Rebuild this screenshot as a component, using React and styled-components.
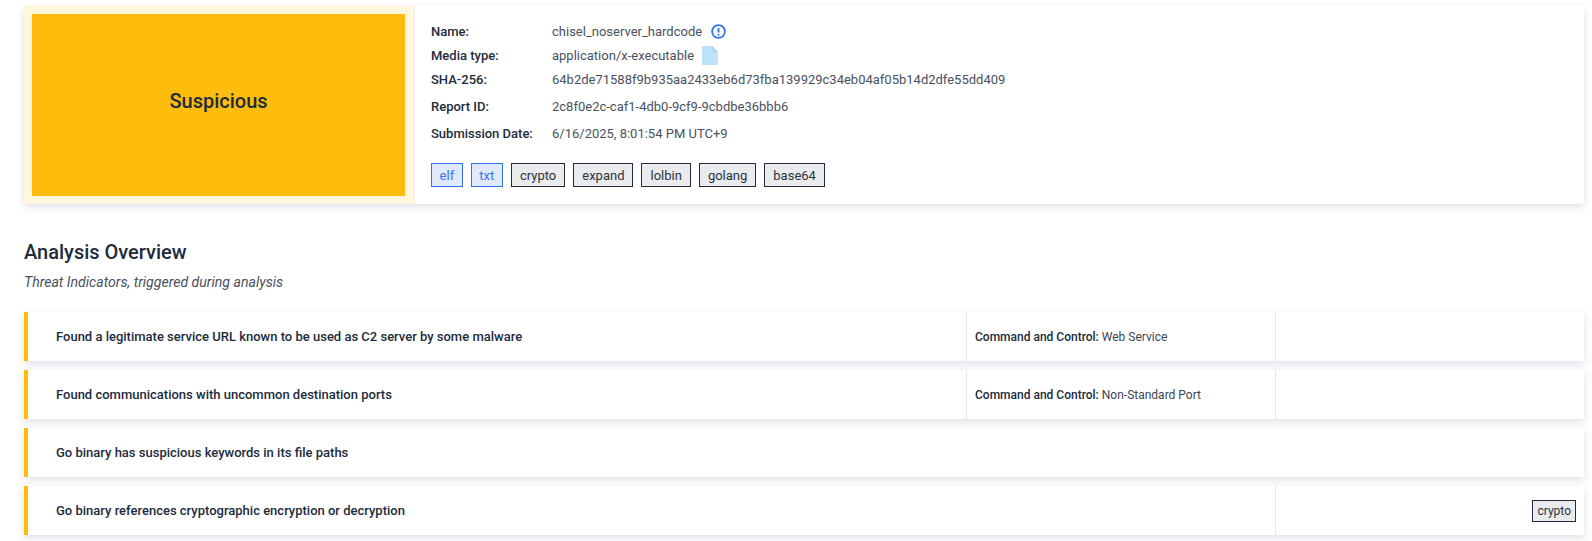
import React from 'react';
import styled, { createGlobalStyle } from 'styled-components';

const GlobalStyle = createGlobalStyle`
  html, body {
    margin: 0;
    padding: 0;
    background: #fff;
  }
  body {
    font-family: Roboto, "Liberation Sans", sans-serif;
    color: #212b3c;
  }
`;

const Page = styled.div`
  width: 1592px;
  height: 541px;
  overflow: hidden;
  box-sizing: border-box;
  padding: 6px 8px 0 24px;
`;

const ReportCard = styled.section`
  display: flex;
  height: 198px;
  background: #fff;
  box-shadow: 0 3px 8px rgba(60, 70, 110, 0.16);
`;

const VerdictFrame = styled.div`
  box-sizing: border-box;
  flex: 0 0 391px;
  padding: 8px 9px 8px 8px;
  background: #fff6dc;
  border-right: 1px solid #ececec;
`;

const VerdictBox = styled.div`
  box-sizing: border-box;
  display: flex;
  align-items: center;
  justify-content: center;
  height: 100%;
  padding-bottom: 9px;
  background: #febc0d;
  font-size: 20px;
  font-weight: 500;
`;

const Details = styled.div`
  flex: 1;
  padding: 13px 0 0 16px;
`;

const InfoRow = styled.div`
  display: flex;
  align-items: center;
  height: ${p => p.$height}px;
  font-size: 13px;
`;

const InfoLabel = styled.div`
  flex: 0 0 121px;
  font-weight: 500;
`;

const InfoValue = styled.div`
  display: flex;
  align-items: center;
  color: #4a5160;
`;

const AlertIcon = styled.svg`
  width: 15px;
  height: 15px;
  margin-left: 9px;
`;

const FileIcon = styled.svg`
  width: 16px;
  height: 19px;
  margin-left: 8px;
`;

const TagList = styled.div`
  display: flex;
  gap: 8px;
  margin-top: 18px;
`;

const Tag = styled.span`
  box-sizing: border-box;
  display: inline-flex;
  align-items: center;
  height: ${p => (p.$small ? 22 : 24)}px;
  padding: 0 ${p => (p.$small ? 4 : p.$blue ? 7.6 : 8)}px;
  font-size: ${p => (p.$small ? 12 : 13)}px;
  border: 1px solid ${p => (p.$blue ? '#2f72f0' : '#212b3c')};
  background: ${p => (p.$blue ? '#e0e9fb' : '#e9ebec')};
  color: ${p => (p.$blue ? '#3a74ee' : '#2b3342')};
`;

const SectionTitle = styled.h2`
  margin: 36px 0 0;
  font-size: 20px;
  line-height: 24px;
  font-weight: 500;
`;

const SectionNote = styled.p`
  margin: 9px 0 0;
  font-size: 14.1px;
  line-height: 18px;
  font-style: italic;
  color: #4a5160;
`;

const Indicators = styled.div`
  display: flex;
  flex-direction: column;
  gap: 9px;
  margin-top: 21px;
`;

const Indicator = styled.article`
  display: grid;
  grid-template-columns: 1fr 309px 309px;
  height: 49px;
  border-left: 4px solid #ffbc0a;
  background: #fff;
  box-shadow: 0 3px 8px rgba(60, 70, 110, 0.16);
`;

const Title = styled.div`
  grid-column: span ${p => p.$span || 1};
  display: flex;
  align-items: center;
  padding-left: 28px;
  font-size: 13px;
  font-weight: 500;
`;

const Cell = styled.div`
  display: flex;
  align-items: center;
  padding: 0 8px;
  border-left: 1px solid #e6e6e6;
  font-size: 12px;
  color: #3c4454;

  b {
    font-weight: 500;
    color: #212b3c;
    margin-right: 3px;
  }
`;

const TagCell = styled(Cell)`
  justify-content: flex-end;
`;

const tags = ['crypto', 'expand', 'lolbin', 'golang', 'base64'];

export default function App() {
  return (
    <Page>
      <GlobalStyle />
      <ReportCard>
        <VerdictFrame>
          <VerdictBox>Suspicious</VerdictBox>
        </VerdictFrame>
        <Details>
          <InfoRow $height={24}>
            <InfoLabel>Name:</InfoLabel>
            <InfoValue>
              chisel_noserver_hardcode
              <AlertIcon viewBox="0 0 16 16" fill="none">
                <circle cx="8" cy="8" r="6.8" stroke="#2f72f0" strokeWidth="1.9" />
                <path d="M8 4.2v4.9" stroke="#2f72f0" strokeWidth="2" />
                <circle cx="8" cy="11.5" r="1.1" fill="#2f72f0" />
              </AlertIcon>
            </InfoValue>
          </InfoRow>
          <InfoRow $height={24}>
            <InfoLabel>Media type:</InfoLabel>
            <InfoValue>
              application/x-executable
              <FileIcon viewBox="0 0 16 19">
                <path d="M1.5 0H10l6 6v11.5a1.5 1.5 0 0 1-1.5 1.5h-13A1.5 1.5 0 0 1 0 17.5v-16A1.5 1.5 0 0 1 1.5 0z" fill="#bbe1fb" />
                <path d="M10 0l6 6h-4.5A1.5 1.5 0 0 1 10 4.5z" fill="#a6d6f8" />
              </FileIcon>
            </InfoValue>
          </InfoRow>
          <InfoRow $height={24}>
            <InfoLabel>SHA-256:</InfoLabel>
            <InfoValue>64b2de71588f9b935aa2433eb6d73fba139929c34eb04af05b14d2dfe55dd409</InfoValue>
          </InfoRow>
          <InfoRow $height={30}>
            <InfoLabel>Report ID:</InfoLabel>
            <InfoValue>2c8f0e2c-caf1-4db0-9cf9-9cbdbe36bbb6</InfoValue>
          </InfoRow>
          <InfoRow $height={24}>
            <InfoLabel>Submission Date:</InfoLabel>
            <InfoValue>6/16/2025, 8:01:54 PM UTC+9</InfoValue>
          </InfoRow>
          <TagList>
            <Tag $blue>elf</Tag>
            <Tag $blue>txt</Tag>
            {tags.map(t => (
              <Tag key={t}>{t}</Tag>
            ))}
          </TagList>
        </Details>
      </ReportCard>

      <SectionTitle>Analysis Overview</SectionTitle>
      <SectionNote>Threat Indicators, triggered during analysis</SectionNote>

      <Indicators>
        <Indicator>
          <Title>Found a legitimate service URL known to be used as C2 server by some malware</Title>
          <Cell>
            <b>Command and Control:</b> Web Service
          </Cell>
          <Cell />
        </Indicator>
        <Indicator>
          <Title>Found communications with uncommon destination ports</Title>
          <Cell>
            <b>Command and Control:</b> Non-Standard Port
          </Cell>
          <Cell />
        </Indicator>
        <Indicator>
          <Title $span={3}>Go binary has suspicious keywords in its file paths</Title>
        </Indicator>
        <Indicator>
          <Title $span={2}>Go binary references cryptographic encryption or decryption</Title>
          <TagCell>
            <Tag $small>crypto</Tag>
          </TagCell>
        </Indicator>
      </Indicators>
    </Page>
  );
}
